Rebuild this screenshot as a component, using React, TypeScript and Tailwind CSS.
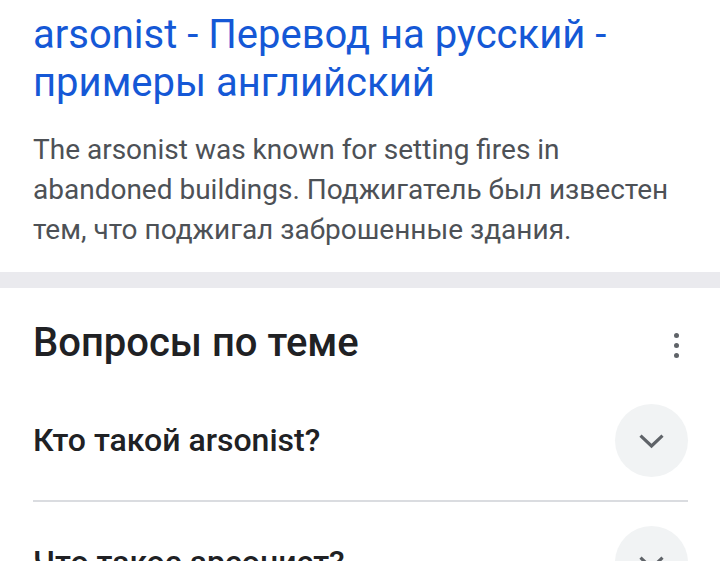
import React from "react";

function Chevron() {
  return (
    <svg width="33" height="33" viewBox="0 0 24 24" fill="none">
      <path d="M4 8.5 L12 16 L20 8.5" stroke="#5f6368" strokeWidth="2.3" />
    </svg>
  );
}

function Question({ text }: { text: string }) {
  return (
    <div className="flex items-center justify-between h-[122px] border-b-2 border-[#dadce0]">
      <span className="text-[32px] leading-[40px] font-medium text-[#202124]">{text}</span>
      <div className="w-[73px] h-[73px] rounded-full bg-[#f1f3f4] flex items-center justify-center">
        <Chevron />
      </div>
    </div>
  );
}

export default function App() {
  return (
    <div className="w-[720px] h-[561px] overflow-hidden bg-white" style={{ fontFamily: "Roboto, 'Noto Sans', sans-serif" }}>
      <div className="px-[33px] pt-[11px] pb-[22px]">
        <div className="text-[40px] leading-[48px] text-[#1558d6]">
          arsonist - Перевод на русский - примеры английский
        </div>
        <div className="mt-[23px] text-[28px] leading-[40px] text-[#4d5156]">
          The arsonist was known for setting fires in abandoned buildings. Поджигатель был известен тем, что поджигал заброшенные здания.
        </div>
      </div>
      <div className="h-[16px] bg-[#eaeaee]" />
      <div className="pr-[32px] pl-[33px]">
        <div className="flex items-center justify-between pt-[31px] pb-[13px]">
          <span className="text-[40px] leading-[48px] font-medium text-[#202124]">Вопросы по теме</span>
          <div className="flex flex-col gap-[5px] items-center mr-[9px] mt-[4px]">
            <div className="w-[5px] h-[5px] rounded-full bg-[#5f6368]" />
            <div className="w-[5px] h-[5px] rounded-full bg-[#5f6368]" />
            <div className="w-[5px] h-[5px] rounded-full bg-[#5f6368]" />
          </div>
        </div>
        <Question text="Кто такой arsonist?" />
        <Question text="Что такое арсонист?" />
      </div>
    </div>
  );
}
